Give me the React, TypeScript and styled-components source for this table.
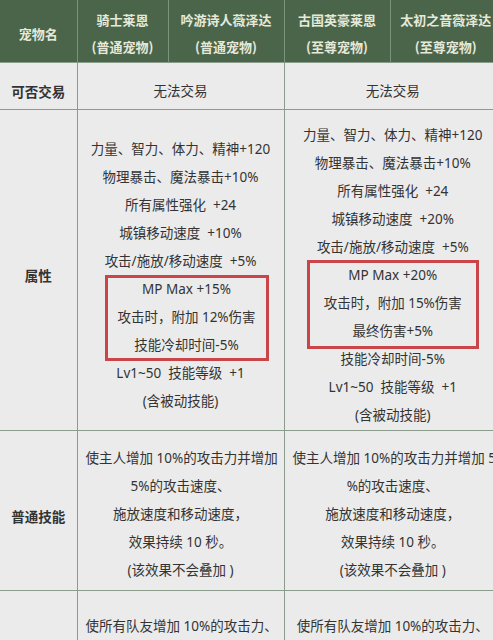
import React from "react";
import styled, { createGlobalStyle } from "styled-components";

const GlobalStyle = createGlobalStyle`
  html, body {
    margin: 0;
    padding: 0;
    overflow: hidden;
    background: #ebebeb;
  }
  body {
    font-family: "Noto Sans", "Noto Sans CJK SC", sans-serif;
    color: #333;
  }
`;

const Table = styled.table`
  width: 501px;
  table-layout: fixed;
  border-collapse: collapse;
  background: #ebebeb;
`;

const HeadCell = styled.th`
  background: #4b654b;
  color: #e6e9d8;
  font-family: "Noto Sans CJK SC", sans-serif;
  font-size: 13px;
  font-weight: 700;
  line-height: 27px;
  text-align: center;
  vertical-align: middle;
  padding: 4px 0 0;
  height: 58px;
  border-right: 1px solid #7c927c;
  &:last-child {
    border-right: none;
  }
`;

const Row = styled.tr<{ $h: number }>`
  height: ${(p) => p.$h}px;
  border-top: 1px solid #8c9c8c;
`;

const Label = styled.td`
  font-family: "Noto Sans CJK SC", sans-serif;
  font-size: 13.5px;
  font-weight: 700;
  color: #333;
  text-align: center;
  vertical-align: middle;
  padding: 10px 0 0;
  border-right: 1px solid #8c9c8c;
`;

const Cell = styled.td<{ $top?: number; $align?: string }>`
  font-size: 13.5px;
  line-height: 28px;
  color: #333;
  text-align: center;
  vertical-align: ${(p) => p.$align || "middle"};
  padding: ${(p) => p.$top ?? 10}px 8px 0;
  border-right: 1px solid #8c9c8c;
  overflow: hidden;
  &:last-child {
    border-right: none;
  }
`;

const Line = styled.div`
  white-space: pre;
`;

const Marked = styled.div<{ $w: number; $shift: number }>`
  position: relative;
  width: ${(p) => p.$w}px;
  margin: 0 auto;
  left: ${(p) => p.$shift}px;
  &::after {
    content: "";
    position: absolute;
    left: 0;
    right: 0;
    top: ${(p) => (p.$shift ? 0 : -1)}px;
    bottom: ${(p) => (p.$shift ? -2 : -4)}px;
    border: 3px solid #c9454a;
    pointer-events: none;
  }
`;

const pets = [
  { name: "骑士莱恩", kind: "(普通宠物)" },
  { name: "吟游诗人薇泽达", kind: "(普通宠物)" },
  { name: "古国英豪莱恩", kind: "(至尊宠物)" },
  { name: "太初之音薇泽达", kind: "(至尊宠物)" },
];

const lines = (items: string[]) => items.map((t, i) => <Line key={i}>{t}</Line>);

export default function App() {
  return (
    <>
      <GlobalStyle />
      <Table>
        <colgroup>
          <col style={{ width: 77 }} />
          <col style={{ width: 91 }} />
          <col style={{ width: 116 }} />
          <col style={{ width: 106 }} />
          <col style={{ width: 111 }} />
        </colgroup>
        <thead>
          <tr>
            <HeadCell>宠物名</HeadCell>
            {pets.map((p) => (
              <HeadCell key={p.name}>
                {p.name}
                <br />
                {p.kind}
              </HeadCell>
            ))}
          </tr>
        </thead>
        <tbody>
          <Row $h={47}>
            <Label>可否交易</Label>
            <Cell colSpan={2}>无法交易</Cell>
            <Cell colSpan={2}>无法交易</Cell>
          </Row>
          <Row $h={321}>
            <Label>属性</Label>
            <Cell colSpan={2}>
              {lines([
                "力量、智力、体力、精神+120",
                "物理暴击、魔法暴击+10%",
                "所有属性强化  +24",
                "城镇移动速度  +10%",
                "攻击/施放/移动速度  +5%",
              ])}
              <Marked $w={164} $shift={6}>
                {lines(["MP Max +15%", "攻击时，附加 12%伤害", "技能冷却时间-5%"])}
              </Marked>
              {lines(["Lv1~50  技能等级  +1", "(含被动技能)"])}
            </Cell>
            <Cell colSpan={2}>
              {lines([
                "力量、智力、体力、精神+120",
                "物理暴击、魔法暴击+10%",
                "所有属性强化  +24",
                "城镇移动速度  +20%",
                "攻击/施放/移动速度  +5%",
              ])}
              <Marked $w={172} $shift={0}>
                {lines(["MP Max +20%", "攻击时，附加 15%伤害", "最终伤害+5%"])}
              </Marked>
              {lines(["技能冷却时间-5%", "Lv1~50  技能等级  +1", "(含被动技能)"])}
            </Cell>
          </Row>
          <Row $h={160}>
            <Label>普通技能</Label>
            <Cell colSpan={2} $top={6}>
              {lines([
                "使主人增加 10%的攻击力并增加",
                "5%的攻击速度、",
                "施放速度和移动速度，",
                "效果持续 10 秒。",
                "(该效果不会叠加 )",
              ])}
            </Cell>
            <Cell colSpan={2} $top={6}>
              {lines([
                "使主人增加 10%的攻击力并增加 5",
                "%的攻击速度、",
                "施放速度和移动速度，",
                "效果持续 10 秒。",
                "(该效果不会叠加 )",
              ])}
            </Cell>
          </Row>
          <Row $h={160}>
            <Label />
            <Cell colSpan={2} $top={21} $align="top">
              {lines(["使所有队友增加 10%的攻击力、"])}
            </Cell>
            <Cell colSpan={2} $top={21} $align="top">
              {lines(["使所有队友增加 10%的攻击力、"])}
            </Cell>
          </Row>
        </tbody>
      </Table>
    </>
  );
}
